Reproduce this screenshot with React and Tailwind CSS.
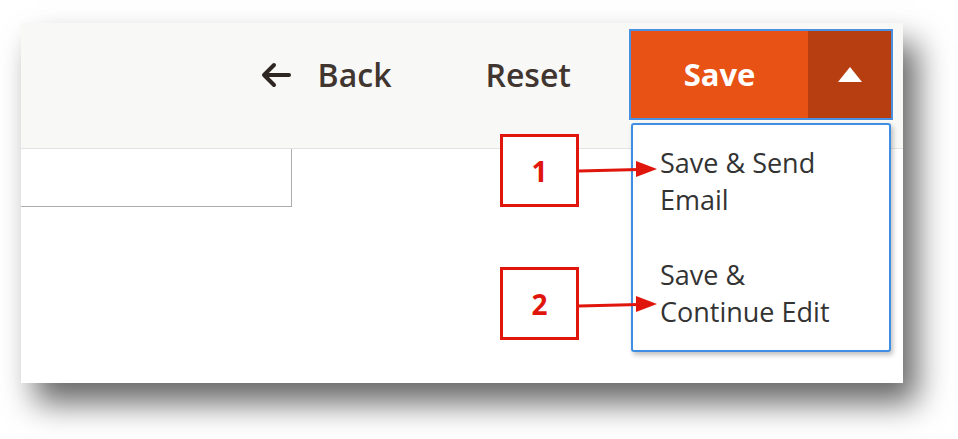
const font = { fontFamily: '"Open Sans", "Noto Sans", sans-serif' };

function Callout({ n, top }) {
  return (
    <div
      className="absolute left-[479px] w-[79px] h-[73px] border-[3px] border-[#e0150c] bg-white flex items-center justify-center text-[28px] font-bold text-[#e0150c]"
      style={{ top }}
    >
      {n}
    </div>
  );
}

export default function App() {
  return (
    <div className="w-[958px] h-[439px] bg-white overflow-hidden" style={font}>
      <div className="relative ml-[21px] mt-[23px] w-[882px] h-[360px] bg-white shadow-[14px_20px_30px_rgba(0,0,0,0.6)]">
        <header className="h-[126px] bg-[#f8f8f7] border-b border-[#e3e3e3] flex items-start justify-end pt-[6px] pr-[10px]">
          <div className="h-[91px] flex items-center text-[#41362f]">
            <svg width="30" height="26" viewBox="0 0 30 26" className="mr-[27px]" fill="none" stroke="#2e2622" strokeWidth="4" strokeLinecap="round" strokeLinejoin="round">
              <path d="M28 13H4" />
              <path d="M13 3 3 13l10 10" />
            </svg>
            <span className="text-[32px] font-semibold">Back</span>
            <span className="text-[32px] font-semibold ml-[94px] mr-[58px]">Reset</span>
          </div>
          <div className="relative">
            <div className="flex h-[91px] w-[264px] border-2 border-[#4a8fe0]">
              <button type="button" className="flex-1 bg-[#e85315] text-white text-[31px] font-bold">
                Save
              </button>
              <button type="button" className="w-[83px] bg-[#b73e11] flex items-center justify-center">
                <span className="block w-0 h-0 border-l-[12px] border-r-[12px] border-b-[15px] border-l-transparent border-r-transparent border-b-white" />
              </button>
            </div>
            <ul className="absolute left-[2px] top-[94px] w-[260px] h-[229px] bg-white border-2 border-[#3f8ee3] rounded-[3px] shadow-[2px_3px_5px_rgba(0,0,0,0.25)] pl-[27px] pt-[19px] text-[27px] leading-[37px] text-[#333]">
              <li>Save &amp; Send<br />Email</li>
              <li className="mt-[38px]">Save &amp;<br />Continue Edit</li>
            </ul>
          </div>
        </header>
        <div className="w-[271px] h-[58px] border-r border-b border-[#adadad] bg-white" />

        <Callout n="1" top={111} />
        <Callout n="2" top={244} />
        <svg className="absolute left-0 top-0" width="882" height="360">
          <g stroke="#e0150c" strokeWidth="3" fill="#e0150c">
            <line x1="558" y1="148" x2="618" y2="146.5" />
            <polygon points="615,138 636,146 615,154" stroke="none" />
            <line x1="558" y1="283" x2="618" y2="281.5" />
            <polygon points="615,273 636,281 615,289" stroke="none" />
          </g>
        </svg>
      </div>
    </div>
  );
}
